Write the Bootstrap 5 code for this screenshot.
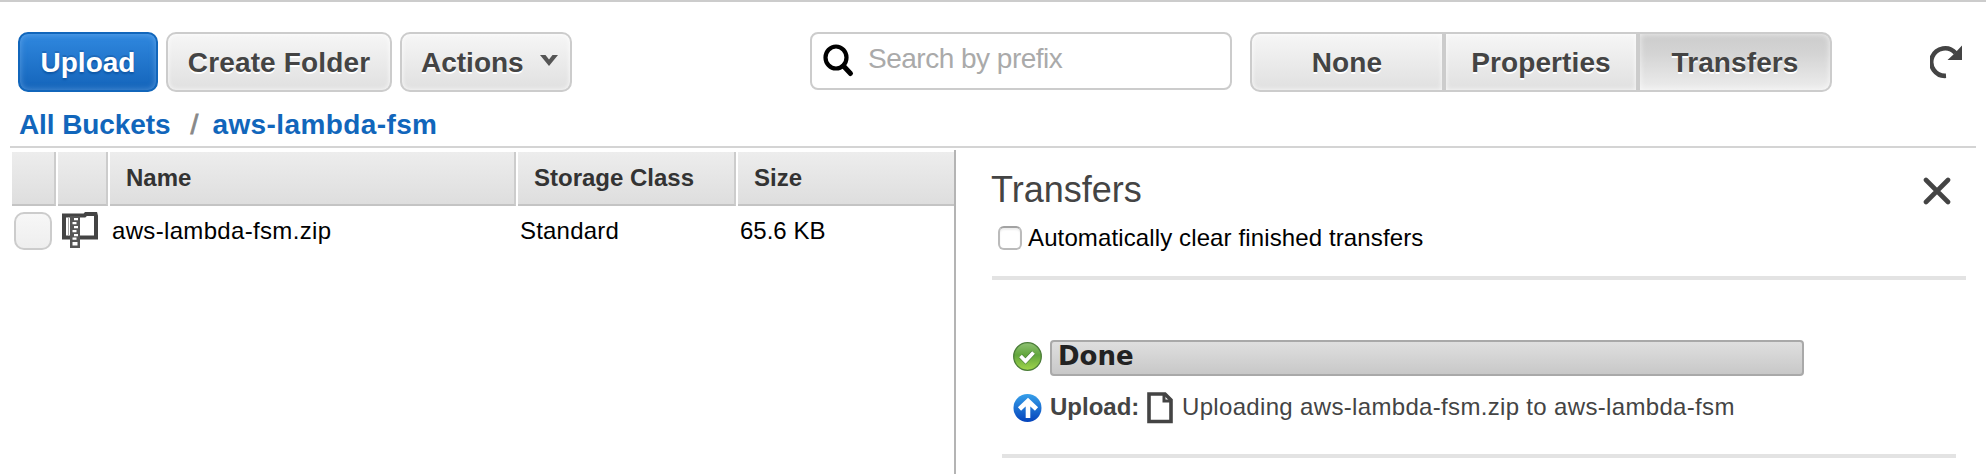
<!DOCTYPE html>
<html lang="en">
<head>
<meta charset="utf-8">
<meta name="viewport" content="width=device-width, initial-scale=1">
<title>S3 bucket browser</title>
<link href="https://cdn.jsdelivr.net/npm/bootstrap@5.3.0/dist/css/bootstrap.min.css" rel="stylesheet">
<style>
body{font-family:"Liberation Sans",Arial,sans-serif;font-size:24px;line-height:28px;color:#000;background:#fff;height:474px;overflow:hidden;border-top:2px solid #ccc}
svg{display:block;flex:none}
/* toolbar */
.toolbar{height:146px;margin:0 10px;border-bottom:2px solid #d4d4d4}
.tools{height:90px;padding:30px 0 0 8px}
.tools .btn{--bs-btn-font-size:28px;--bs-btn-line-height:32px;--bs-btn-font-weight:700;--bs-btn-border-width:2px;--bs-btn-border-radius:10px;--bs-btn-padding-x:0;--bs-btn-padding-y:0;height:60px;padding-top:1px;white-space:nowrap}
.btn-aws,.btn-aws:hover{color:#444!important;border-color:#ccc!important;background:linear-gradient(#f6f6f6,#e0e0e0);box-shadow:inset 0 0 5px rgba(255,255,255,.9);text-shadow:0 2px 0 #fff}
.btn-aws.active{background:linear-gradient(#ccc,#d4d4d4 35%,#ededed);box-shadow:inset 0 0 6px rgba(255,255,255,.7)}
.btn-up,.btn-up:hover{color:#fff!important;border-color:#1166bb!important;background:linear-gradient(#3088df,#1464ba);box-shadow:inset 0 0 6px rgba(140,190,240,.55);text-shadow:0 -2px 0 rgba(10,60,120,.25),0 2px 2px #0d56a5}
.w-up{width:140px}.w-create{width:226px;letter-spacing:.15px}.w-actions{width:172px}
.search{width:422px;height:58px;margin-left:238px;border:2px solid #ccc;border-radius:8px;padding-left:11px}
.search input{font-size:28px;line-height:32px;letter-spacing:-.5px;color:#333;height:50px;margin:-4px 0 0 13px}
.search input::placeholder{color:#aaa;opacity:1}
.views{width:582px;margin-left:18px}
.views .btn{flex:none!important;width:194px;letter-spacing:.1px}
.views .btn+.btn{margin-left:0!important}
.reload{margin:13px 0 0 98px}
.crumbs{font-size:28px;line-height:34px;font-weight:700;margin:16px 0 0;padding-left:9px;white-space:nowrap}
.crumbs a{color:#1166bb;text-decoration:none}
.crumbs a:first-child{letter-spacing:-.1px}
.crumbs a:last-child{letter-spacing:.4px}
.crumbs .slash{color:#888;font-weight:400;margin:0 10px 0 20px;display:inline-block;width:12px;-webkit-text-stroke:.8px #888}
/* object list */
.list{width:956px;height:324px;margin-top:2px;border-right:2px solid #b4b4b4;flex:none}
.list-head{margin-left:12px;height:56px;gap:2px;font-weight:700;color:#333}
.list-head div{height:54px;margin-top:2px;line-height:52px;padding-left:16px;background:linear-gradient(#ededed,#dedede);border-right:2px solid #ccc;border-bottom:2px solid #c4c4c4;white-space:nowrap;flex:none}
.list-head div:last-child{border-right:0}
.c-check{width:44px}.c-type{width:50px}.c-name{width:406px}.c-class{width:218px}.c-size{width:216px}
.list-row{padding-left:14px;height:50px;white-space:nowrap}
.box{width:38px;height:38px;border:2px solid #ccc;border-radius:10px;background:linear-gradient(#f7f7f7,#eee);margin-top:6px;flex:none}
.list-row .val{line-height:28px;margin-top:11px;flex:none}
/* transfers pane */
.pane{height:324px;margin-top:2px;padding:0 20px 0 36px}
.pane-head{height:130px;border-bottom:4px solid #e3e3e3}
.pane h1{font-size:36px;line-height:42px;font-weight:400;color:#444;margin:19px 0 0 -1px}
.auto{margin:13px 0 0 6px;white-space:nowrap}
.auto .form-check-input{width:24px;height:24px;margin:2px 6px 0 0;border:2px solid #bbb;border-top-color:#a2a2a2;border-radius:6px;box-shadow:inset 0 2px 2px #eee;flex:none}
.job{margin:60px 10px 0;height:118px;border-bottom:4px solid #e3e3e3;padding-left:10px;color:#444}
.bar{width:754px;height:36px;border:2px solid #a9a9a9;border-radius:4px;background:linear-gradient(#dfdfdf,#c8c8c8);color:#222;font:700 26px/28px "DejaVu Sans",Verdana,sans-serif;padding-left:6px;margin-left:8px}
.detail{margin-top:15px;white-space:nowrap;line-height:28px}
.t1{letter-spacing:.33px}.t2{letter-spacing:.12px}
</style>
</head>
<body>
<header class="toolbar">
  <div class="tools d-flex align-items-start">
    <button class="btn btn-up w-up">Upload</button>
    <button class="btn btn-aws w-create ms-2">Create Folder</button>
    <button class="btn btn-aws w-actions ms-2 d-flex align-items-center" aria-label="Actions"><span style="margin-left:19px">Actions</span>
      <svg width="20" height="14" viewBox="0 0 20 14" style="margin:-4px 0 0 15px"><path d="M1 1h5.5l3.5 4.5L13.500 1H19l-9 11z" fill="#555"/></svg></button>
    <div class="search d-flex align-items-center">
      <svg width="32" height="36" viewBox="0 0 32 36"><ellipse cx="13" cy="14.500" rx="10.500" ry="11" fill="none" stroke="#000" stroke-width="4.200"/><path d="M20.500 23l7 7.500" stroke="#000" stroke-width="5" stroke-linecap="round"/></svg>
      <input class="border-0 p-0 bg-transparent" type="text" placeholder="Search by prefix" aria-label="Search by prefix">
    </div>
    <div class="btn-group views" role="group">
      <button class="btn btn-aws">None</button><button class="btn btn-aws">Properties</button><button class="btn btn-aws active">Transfers</button>
    </div>
    <svg class="reload" width="34" height="34" viewBox="0 0 34 34"><path d="M16 30.800A13.800 13.800 0 1 1 25.500 8" fill="none" stroke="#444" stroke-width="4.600"/><path d="M32 .5V15H17.500l6.500-6z" fill="#444"/></svg>
  </div>
  <nav class="crumbs"><a href="#">All Buckets</a><span class="slash">/</span><a href="#">aws-lambda-fsm</a></nav>
</header>
<main class="d-flex">
  <section class="list">
    <div class="list-head d-flex">
      <div class="c-check"></div><div class="c-type"></div><div class="c-name">Name</div><div class="c-class">Storage Class</div><div class="c-size">Size</div>
    </div>
    <div class="list-row d-flex">
      <span class="box"></span>
      <svg width="36" height="36" viewBox="0 0 36 36" style="margin:6px 0 0 10px"><path d="M2 3.500h20.500L24 2h9.500l.5 2v21.500H2z" fill="#fff" stroke="#444" stroke-width="4"/><path d="M23 0h12v4H22z" fill="#444"/><path d="M6.500 5.500v18" stroke="#aaa"/><path d="M8 4h10v32H8z" fill="#555"/><path d="M12 6h4v2.200h-4zM10.500 10h4v2.200h-4zM12 14h4v2.200h-4zM10.500 18h4v2.200h-4zM12 22h4v2.200h-4zM10.500 25.500h4v2.200h-4zM10.500 30h5v3.500h-5z" fill="#fff"/></svg>
      <span class="val t1" style="width:408px;margin-left:14px">aws-lambda-fsm.zip</span>
      <span class="val" style="width:220px;letter-spacing:.2px">Standard</span>
      <span class="val">65.6 KB</span>
    </div>
  </section>
  <section class="pane flex-grow-1">
    <div class="pane-head">
      <div class="d-flex justify-content-between">
        <h1>Transfers</h1>
        <svg width="28" height="28" viewBox="0 0 28 28" style="margin:27px 15px 0 0"><path d="M3 3l22 22M25 3L3 25" stroke="#444" stroke-width="4.600" stroke-linecap="round"/></svg>
      </div>
      <label class="auto d-flex"><input class="form-check-input" type="checkbox"><span class="t2">Automatically clear finished transfers</span></label>
    </div>
    <div class="job">
      <div class="d-flex align-items-start">
        <svg width="30" height="30" viewBox="0 0 30 30" style="margin-top:2px"><defs><linearGradient id="g" x2="0" y2="1"><stop stop-color="#8fc173"/><stop offset=".45" stop-color="#62a63c"/><stop offset="1" stop-color="#a1d64b"/></linearGradient><linearGradient id="b" x2="0" y2="1"><stop stop-color="#36a0ea"/><stop offset="1" stop-color="#0443bb"/></linearGradient></defs><circle cx="15.500" cy="14.500" r="13.800" fill="url(#g)" stroke="#4b7d38" stroke-width="1.300"/><path d="M8.500 14l5 5 8-8.500" fill="none" stroke="#4b7d38" stroke-width="5"/><path d="M8.500 14l5 5 8-8.500" fill="none" stroke="#fff" stroke-width="3.800"/></svg>
        <div class="bar">Done</div>
      </div>
      <div class="detail d-flex">
        <svg width="30" height="30" viewBox="0 0 30 30" style="margin-top:2px"><circle cx="15.500" cy="15" r="14" fill="url(#b)"/><path d="M16 25V9M7.500 16L16 8l8.500 8" fill="none" stroke="#fff" stroke-width="4.600"/></svg>
        <b style="margin-left:8px;width:96px;margin-top:2px">Upload:</b>
        <svg width="26" height="32" viewBox="0 0 26 32" style="margin:1px 0 0 1px"><path d="M2 2h16l6 6v21.500H2z" fill="#fff" stroke="#444" stroke-width="3.600"/><path d="M17 1v8h8" fill="none" stroke="#444" stroke-width="3"/></svg>
        <span class="t1" style="margin:2px 0 0 9px">Uploading aws-lambda-fsm.zip to aws-lambda-fsm</span>
      </div>
    </div>
  </section>
</main>
<script src="https://cdn.jsdelivr.net/npm/bootstrap@5.3.0/dist/js/bootstrap.bundle.min.js"></script>
</body>
</html>
